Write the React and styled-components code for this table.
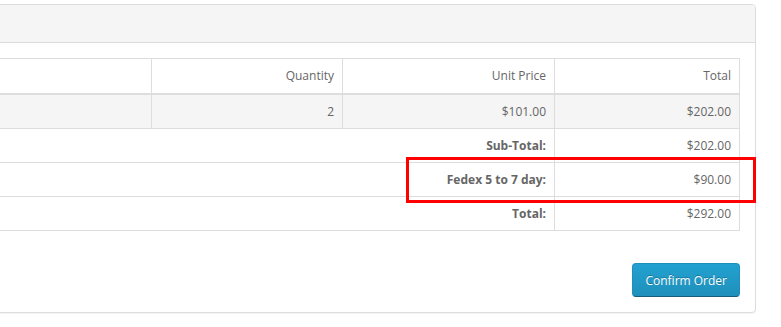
import styled, { createGlobalStyle } from 'styled-components';

const GlobalStyle = createGlobalStyle`
  html, body {
    margin: 0;
    padding: 0;
    background: #fff;
  }
  body {
    font-family: 'Open Sans', 'Liberation Sans', sans-serif;
    font-size: 12px;
    color: #666;
  }
`;

const Page = styled.div`
  position: relative;
  width: 781px;
  height: 327px;
  overflow: hidden;
  padding-top: 4px;
  box-sizing: border-box;
`;

const Panel = styled.div`
  margin: 0 25px 0 -400px;
  border: 1px solid #ddd;
  border-radius: 4px;
  background: #fff;
  box-shadow: 0 1px 1px rgba(0, 0, 0, 0.05);
`;

const PanelHeading = styled.div`
  background: #f5f5f5;
  border-bottom: 1px solid #ddd;
  border-radius: 3px 3px 0 0;
  height: 37px;
`;

const PanelBody = styled.div`
  display: flex;
  flex-direction: column;
  padding: 15px;
`;

const Table = styled.table`
  width: 100%;
  border-collapse: collapse;
  table-layout: fixed;
  border: 1px solid #ddd;
`;

const Cell = styled.td`
  padding: 8px;
  line-height: 17px;
  border: 1px solid #ddd;
  text-align: right;
  font-weight: ${p => (p.$bold ? 700 : 400)};
  vertical-align: top;
  white-space: nowrap;
  overflow: hidden;
`;

const HeadCell = styled(Cell).attrs({ as: 'th' })`
  border-bottom-width: 2px;
  line-height: 18px;
  font-weight: 400;
`;

const StripedRow = styled.tr`
  background: #f5f5f5;
`;

const Buttons = styled.div`
  display: flex;
  justify-content: flex-end;
  margin-top: 32px;
`;

const ConfirmButton = styled.button`
  font-family: inherit;
  font-size: 12px;
  line-height: 17px;
  padding: 7.5px 12px;
  color: #fff;
  text-shadow: 0 -1px 0 rgba(0, 0, 0, 0.25);
  background: linear-gradient(to bottom, #23a1d1, #1f90bb);
  border: 1px solid;
  border-color: #1f90bb #1f90bb #145e7a;
  border-radius: 4px;
  cursor: pointer;
`;

const Highlight = styled.div`
  position: absolute;
  left: 406px;
  top: 157px;
  width: 350px;
  height: 46px;
  box-sizing: border-box;
  border: 3px solid #f00;
  pointer-events: none;
`;

const totals = [
  { label: 'Sub-Total:', value: '$202.00' },
  { label: 'Fedex 5 to 7 day:', value: '$90.00' },
  { label: 'Total:', value: '$292.00' },
];

export default function App() {
  return (
    <Page>
      <GlobalStyle />
      <Panel>
        <PanelHeading />
        <PanelBody>
          <Table>
            <colgroup>
              <col />
              <col style={{ width: 191 }} />
              <col style={{ width: 212 }} />
              <col style={{ width: 185 }} />
            </colgroup>
            <thead>
              <tr>
                <HeadCell />
                <HeadCell>Quantity</HeadCell>
                <HeadCell>Unit Price</HeadCell>
                <HeadCell>Total</HeadCell>
              </tr>
            </thead>
            <tbody>
              <StripedRow>
                <Cell />
                <Cell>2</Cell>
                <Cell>$101.00</Cell>
                <Cell>$202.00</Cell>
              </StripedRow>
            </tbody>
            <tfoot>
              {totals.map(t => (
                <tr key={t.label}>
                  <Cell colSpan={3} $bold>{t.label}</Cell>
                  <Cell>{t.value}</Cell>
                </tr>
              ))}
            </tfoot>
          </Table>
          <Buttons>
            <ConfirmButton>Confirm Order</ConfirmButton>
          </Buttons>
        </PanelBody>
      </Panel>
      <Highlight />
    </Page>
  );
}
